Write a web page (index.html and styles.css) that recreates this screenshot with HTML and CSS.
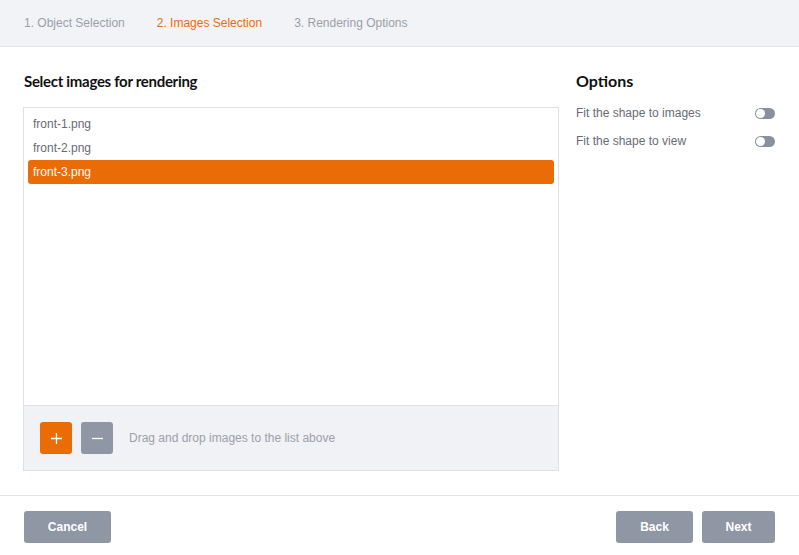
FILE: index.html
```html
<!DOCTYPE html>
<html>
<head>
<meta charset="utf-8">
<link rel="stylesheet" href="styles.css">
</head>
<body>
<div class="app">
  <header class="steps">
    <span class="step">1. Object Selection</span>
    <span class="step active">2. Images Selection</span>
    <span class="step">3. Rendering Options</span>
  </header>
  <main class="main">
    <section class="left">
      <h2 class="title title-main">Select images for rendering</h2>
      <div class="listbox">
        <ul class="list">
          <li class="item">front-1.png</li>
          <li class="item">front-2.png</li>
          <li class="item selected">front-3.png</li>
        </ul>
        <div class="toolbar">
          <button class="sq add"><svg width="13" height="13" viewBox="0 0 13 13"><path d="M6.5 1v11M1 6.5h11" stroke="#fff" stroke-width="1.3"/></svg></button>
          <button class="sq remove"><svg width="13" height="13" viewBox="0 0 13 13"><path d="M1 6.5h11" stroke="#fff" stroke-width="1.3"/></svg></button>
          <span class="hint">Drag and drop images to the list above</span>
        </div>
      </div>
    </section>
    <aside class="right">
      <h2 class="title">Options</h2>
      <div class="opt"><span>Fit the shape to images</span><span class="toggle"></span></div>
      <div class="opt"><span>Fit the shape to view</span><span class="toggle"></span></div>
    </aside>
  </main>
  <footer class="footer">
    <button class="btn w-cancel">Cancel</button>
    <div class="spacer"></div>
    <button class="btn w-back">Back</button>
    <button class="btn w-next">Next</button>
  </footer>
</div>
</body>
</html>
```
FILE: styles.css
```css
* { box-sizing: border-box; }
html, body { margin: 0; padding: 0; background: #fff; }
body { font-family: "Liberation Sans", Arial, sans-serif; font-size: 12px; }
.app { width: 799px; height: 555px; display: flex; flex-direction: column; }
.steps {
  height: 47px; background: #f2f3f6; border-bottom: 1px solid #e2e3e6;
  display: flex; align-items: center; padding: 0 24px; gap: 32px;
  font-size: 12px; color: #9a9fa9;
}
.step.active { color: #ea6c0a; }
.main { display: flex; padding: 24px 24px 24px 23px; gap: 17px; border-bottom: 1px solid #e2e3e6; height: 449px; }
.left { width: 536px; display: flex; flex-direction: column; }
.right { flex: 1; }
.title {
  margin: 0 0 8px 0; height: 20px; line-height: 20px;
  font-family: Lato, "Open Sans", sans-serif; font-weight: 700; font-size: 16px; color: #111;
}
.title-main { margin: 0 0 16px 1px; font-size: 15px; letter-spacing: -0.3px; }
.listbox { border: 1px solid #dfe0e3; height: 364px; display: flex; flex-direction: column; }
.list { list-style: none; margin: 0; padding: 4px 4px; flex: 1; }
.item { height: 24px; line-height: 24px; padding-left: 5px; color: #676b73; font-size: 12px; border-radius: 3px; }
.item.selected { background: #ea6c06; color: #fff; }
.toolbar {
  height: 65px; background: #f1f2f5; border-top: 1px solid #e2e3e6;
  display: flex; align-items: center; padding: 0 16px; gap: 9px;
}
.sq { width: 32px; height: 32px; border: none; border-radius: 3px; padding: 0; display: flex; align-items: center; justify-content: center; }
.add { background: #ea6c06; }
.remove { background: #8f96a4; }
.hint { margin-left: 7px; color: #9ba0ab; font-size: 12px; }
.opt { height: 28px; display: flex; align-items: center; justify-content: space-between; color: #676b73; font-size: 12px; }
.toggle { width: 20px; height: 11px; border-radius: 6px; background: #8a909d; position: relative; }
.toggle::before { content: ""; position: absolute; left: 1px; top: 1px; width: 9px; height: 9px; border-radius: 50%; background: #fff; }
.footer { display: flex; padding: 15px 24px 12px 24px; gap: 9px; }
.spacer { flex: 1; }
.btn { height: 32px; border: none; border-radius: 3px; background: #8f96a4; color: #fff; font-family: "Liberation Sans", Arial, sans-serif; font-weight: 700; font-size: 12px; }
.w-cancel { width: 87px; }
.w-back { width: 77px; }
.w-next { width: 73px; }
```
